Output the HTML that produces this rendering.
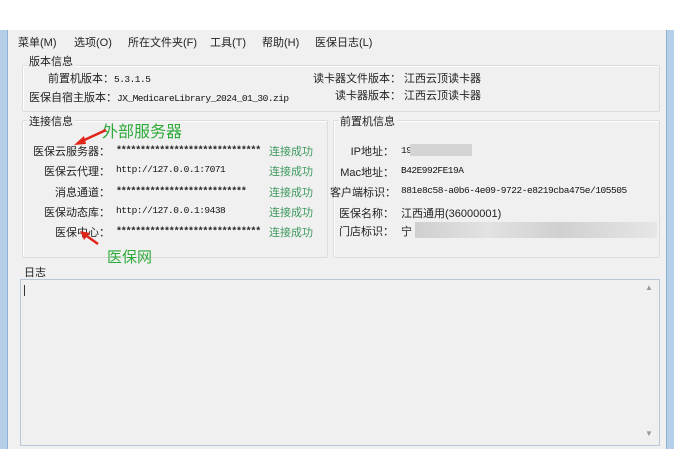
<!DOCTYPE html>
<html><head><meta charset="utf-8"><style>
*{margin:0;padding:0;box-sizing:border-box}
body{width:674px;height:449px;overflow:hidden;background:#fff;position:relative;font-family:"Liberation Sans","Noto Sans CJK SC",sans-serif;font-size:11px;color:#222}
.a{position:absolute;white-space:nowrap}
.win{position:absolute;left:0;top:30px;width:674px;height:419px;background:#f0f0f0}
.bl{position:absolute;top:30px;width:8px;height:419px;background:#b5cfe9;border-right:1px solid #8fb0d2}
.gb{position:absolute;border:1px solid #dcdcdc;border-radius:2px;box-shadow:inset 1px 1px 0 #fff}
.m{font-family:"Liberation Mono","Noto Sans CJK SC",monospace;font-size:9.5px;letter-spacing:-0.5px;color:#111}
.s{font-family:"Liberation Mono",monospace;font-size:10px;letter-spacing:-1.2px;font-weight:bold;color:#222}
.r{text-align:right}
.ok{color:#3d9a5e;font-size:11px}
</style></head><body>
<div class="win"></div>
<div class="bl" style="left:0"></div>
<div class="bl" style="left:666px;border-right:none;border-left:1px solid #8fb0d2"></div>
<div class="a" style="left:18px;top:34px">菜单(M)</div>
<div class="a" style="left:74px;top:34px">选项(O)</div>
<div class="a" style="left:128px;top:34px">所在文件夹(F)</div>
<div class="a" style="left:210px;top:34px">工具(T)</div>
<div class="a" style="left:262px;top:34px">帮助(H)</div>
<div class="a" style="left:315px;top:34px">医保日志(L)</div>

<div class="gb" style="left:22px;top:65px;width:638px;height:47px"></div>
<div class="a" style="left:27px;top:53px;background:#f0f0f0;padding:0 2px">版本信息</div>
<div class="a" style="left:48px;top:70px">前置机版本：<span class="m">5.3.1.5</span></div>
<div class="a" style="left:29px;top:89px">医保自宿主版本：<span class="m">JX_MedicareLibrary_2024_01_30.zip</span></div>
<div class="a" style="left:313px;top:70px">读卡器文件版本：&nbsp;江西云顶读卡器</div>
<div class="a" style="left:335px;top:87px">读卡器版本：&nbsp;江西云顶读卡器</div>

<div class="gb" style="left:22px;top:120px;width:306px;height:138px"></div>
<div class="a" style="left:27px;top:113px;background:#f0f0f0;padding:0 2px">连接信息</div>
<div class="a" style="left:102px;top:118px;font-size:16px;color:#2eaa3a">外部服务器</div>
<svg class="a" style="left:70px;top:128px" width="40" height="20"><path d="M36 2 L10 14" stroke="#e0241a" stroke-width="2.5"/><path d="M4 17 L14 8 L16 16Z" fill="#e0241a"/></svg>
<div class="a r" style="left:22px;width:88px;top:143px">医保云服务器：</div><div class="a s" style="left:116px;top:146px">******************************</div><div class="a ok" style="left:269px;top:143px">连接成功</div>
<div class="a r" style="left:22px;width:88px;top:163px">医保云代理：</div><div class="a m" style="left:116px;top:164px">http://127.0.0.1:7071</div><div class="a ok" style="left:269px;top:163px">连接成功</div>
<div class="a r" style="left:22px;width:88px;top:184px">消息通道：</div><div class="a s" style="left:116px;top:187px">***************************</div><div class="a ok" style="left:269px;top:184px">连接成功</div>
<div class="a r" style="left:22px;width:88px;top:204px">医保动态库：</div><div class="a m" style="left:116px;top:205px">http://127.0.0.1:9438</div><div class="a ok" style="left:269px;top:204px">连接成功</div>
<div class="a r" style="left:22px;width:88px;top:224px">医保中心：</div><div class="a s" style="left:116px;top:227px">******************************</div><div class="a ok" style="left:269px;top:224px">连接成功</div>
<svg class="a" style="left:78px;top:230px" width="24" height="16"><path d="M20 14 L6 4" stroke="#e0241a" stroke-width="2.5"/><path d="M2 1 L12 3 L6 10Z" fill="#e0241a"/></svg>
<div class="a" style="left:107px;top:246px;font-size:15px;color:#2eaa3a">医保网</div>

<div class="gb" style="left:333px;top:120px;width:327px;height:138px"></div>
<div class="a" style="left:338px;top:113px;background:#f0f0f0;padding:0 2px">前置机信息</div>
<div class="a r" style="left:330px;width:64px;top:143px">IP地址：</div><div class="a m" style="left:401px;top:145px">19</div>
<div class="a" style="left:410px;top:144px;width:62px;height:12px;background:#d4d4d4"></div>
<div class="a r" style="left:330px;width:64px;top:164px">Mac地址：</div><div class="a m" style="left:401px;top:165px">B42E992FE19A</div>
<div class="a r" style="left:330px;width:64px;top:184px">客户端标识：</div><div class="a m" style="left:401px;top:185px;letter-spacing:-0.45px">881e8c58-a0b6-4e09-9722-e8219cba475e/105505</div>
<div class="a r" style="left:330px;width:64px;top:205px">医保名称：</div><div class="a" style="left:401px;top:205px">江西通用(36000001)</div>
<div class="a r" style="left:330px;width:64px;top:223px">门店标识：</div><div class="a" style="left:401px;top:223px">宁</div>
<div class="a" style="left:415px;top:222px;width:242px;height:16px;background:linear-gradient(90deg,#cfcfcf,#e2e2e2 30%,#d0d0d0 60%,#e6e6e6)"></div>

<div class="a" style="left:24px;top:264px">日志</div>
<div class="a" style="left:20px;top:279px;width:640px;height:167px;border:1px solid #b8c8d8;background:#f0f0f0"></div>
<div class="a" style="left:24px;top:285px;width:1px;height:11px;background:#333"></div>
<div class="a" style="left:645px;top:283px;font-size:8px;color:#999">▲</div>
<div class="a" style="left:645px;top:429px;font-size:8px;color:#999">▼</div>
</body></html>
